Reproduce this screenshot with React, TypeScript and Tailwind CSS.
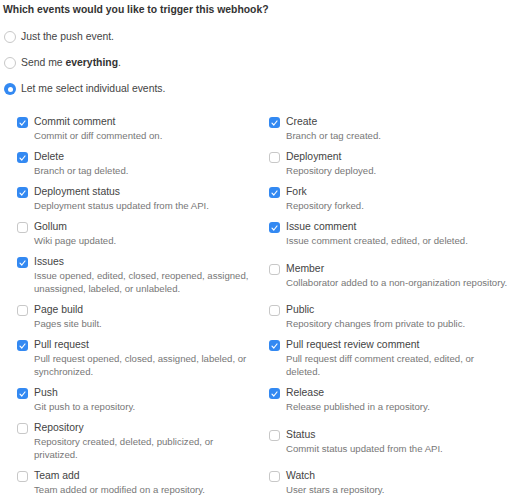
import React, { useState } from 'react';

type Hook = { name: string; desc: string; checked: boolean };

// line breaks follow the original column wrapping
const events: Hook[] = [
  { name: 'Commit comment', desc: 'Commit or diff commented on.', checked: true },
  { name: 'Create', desc: 'Branch or tag created.', checked: true },
  { name: 'Delete', desc: 'Branch or tag deleted.', checked: true },
  { name: 'Deployment', desc: 'Repository deployed.', checked: false },
  { name: 'Deployment status', desc: 'Deployment status updated from the API.', checked: true },
  { name: 'Fork', desc: 'Repository forked.', checked: true },
  { name: 'Gollum', desc: 'Wiki page updated.', checked: false },
  { name: 'Issue comment', desc: 'Issue comment created, edited, or deleted.', checked: true },
  { name: 'Issues', desc: 'Issue opened, edited, closed, reopened, assigned,\nunassigned, labeled, or unlabeled.', checked: true },
  { name: 'Member', desc: 'Collaborator added to a non-organization repository.', checked: false },
  { name: 'Page build', desc: 'Pages site built.', checked: false },
  { name: 'Public', desc: 'Repository changes from private to public.', checked: false },
  { name: 'Pull request', desc: 'Pull request opened, closed, assigned, labeled, or\nsynchronized.', checked: true },
  { name: 'Pull request review comment', desc: 'Pull request diff comment created, edited, or\ndeleted.', checked: true },
  { name: 'Push', desc: 'Git push to a repository.', checked: true },
  { name: 'Release', desc: 'Release published in a repository.', checked: true },
  { name: 'Repository', desc: 'Repository created, deleted, publicized, or\nprivatized.', checked: false },
  { name: 'Status', desc: 'Commit status updated from the API.', checked: false },
  { name: 'Team add', desc: 'Team added or modified on a repository.', checked: false },
  { name: 'Watch', desc: 'User stars a repository.', checked: false },
];

const Radio = ({ on, children }: { on: boolean; children: React.ReactNode }) => (
  <label className="flex items-center gap-[5px] h-[14px]">
    {on ? (
      <span className="w-[12px] h-[12px] rounded-full bg-[#3389f2] flex items-center justify-center">
        <span className="w-[5px] h-[5px] rounded-full bg-white" />
      </span>
    ) : (
      <span className="w-[12px] h-[12px] rounded-full border border-[#c8c8c8] bg-white" />
    )}
    <span>{children}</span>
  </label>
);

const Box = ({ on }: { on: boolean }) =>
  on ? (
    <span className="mt-[2px] w-[11px] h-[11px] shrink-0 rounded-[3px] bg-[#3389f2] flex items-center justify-center">
      <svg width="7" height="6" viewBox="0 0 7 6" fill="none">
        <path d="M1 3.2 L2.8 5 L6 1" stroke="white" strokeWidth="1.2" strokeLinecap="round" strokeLinejoin="round" />
      </svg>
    </span>
  ) : (
    <span className="mt-[2px] w-[11px] h-[11px] shrink-0 rounded-[3px] border border-[#c8c8c8] bg-white" />
  );

export default function App() {
  const [mode] = useState(2);
  return (
    <div className="w-[515px] h-[500px] bg-white text-[#333] overflow-hidden" style={{ fontFamily: '"Liberation Sans", Arial, sans-serif' }}>
      <div className="pl-[3px] pt-[3px]">
        <h3 className="text-[10.4px] font-bold leading-[14px] text-[#333]">Which events would you like to trigger this webhook?</h3>
        <div className="pl-[1px] mt-[13px] flex flex-col gap-[12px] text-[10.4px] text-[#444]">
          <Radio on={mode === 0}>Just the push event.</Radio>
          <Radio on={mode === 1}>
            Send me <b className="text-[#333]">everything</b>.
          </Radio>
          <Radio on={mode === 2}>Let me select individual events.</Radio>
        </div>
      </div>
      <div className="mt-[19px] pl-[17px] grid grid-cols-[252px_246px] items-center gap-y-[8px]">
        {events.map((e) => (
          <label key={e.name} className="flex gap-[6px]">
            <Box on={e.checked} />
            <div className="w-[229px]">
              <div className="text-[10.4px] leading-[14px] text-[#444]">{e.name}</div>
              <div className="text-[9.6px] leading-[13px] text-[#777] whitespace-pre-line">{e.desc}</div>
            </div>
          </label>
        ))}
      </div>
    </div>
  );
}
